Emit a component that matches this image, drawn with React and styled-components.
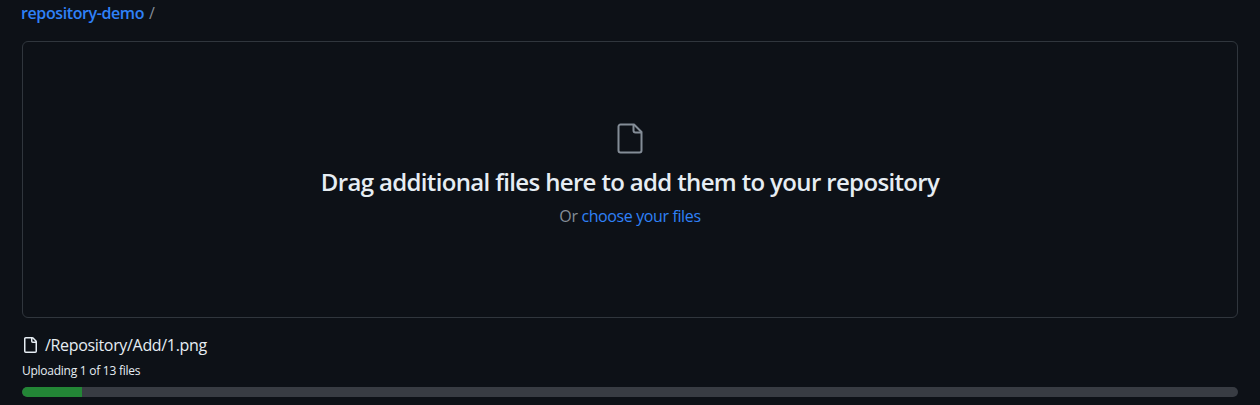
import styled, { createGlobalStyle } from "styled-components";

const GlobalStyle = createGlobalStyle`
  html, body {
    margin: 0;
    padding: 0;
    background: #0d1117;
  }
  body {
    font-family: "Open Sans", "Noto Sans", "Liberation Sans", sans-serif;
    color: #e6edf3;
  }
`;

const Page = styled.div`
  width: 1260px;
  height: 405px;
  overflow: hidden;
  padding: 4px 22px 0 22px;
  box-sizing: border-box;
`;

const Breadcrumb = styled.div`
  height: 18px;
  margin-left: -1px;
  display: flex;
  align-items: center;
  gap: 5px;
  font-size: 16px;
  line-height: 18px;
`;

const RepoLink = styled.a`
  color: #2f81f7;
  font-weight: 600;
  letter-spacing: -0.4px;
`;

const Slash = styled.span`
  color: #848d97;
`;

const DropZone = styled.div`
  margin-top: 19px;
  height: 277px;
  box-sizing: border-box;
  border: 1px solid #30363d;
  border-radius: 6px;
  display: flex;
  flex-direction: column;
  align-items: center;
  padding-top: 81px;
`;

const BigIcon = styled.svg`
  width: 26px;
  height: 31px;
  display: block;
  color: #848d97;
`;

const Title = styled.h2`
  margin: 12px 0 0;
  font-size: 24px;
  line-height: 32px;
  font-weight: 600;
  color: #e6edf3;
  letter-spacing: -0.65px;
`;

const Subtitle = styled.p`
  margin: 8px 0 0;
  font-size: 16px;
  line-height: 20px;
  color: #848d97;
  letter-spacing: -0.38px;
`;

const ChooseLink = styled.a`
  color: #2f81f7;
`;

const FileRow = styled.div`
  margin-top: 17px;
  height: 20px;
  display: flex;
  align-items: center;
  gap: 7px;
  font-size: 16px;
  line-height: 20px;
  color: #e6edf3;
  letter-spacing: -0.33px;
`;

const SmallIcon = styled.svg`
  width: 16px;
  height: 16px;
  display: block;
  fill: #e6edf3;
`;

const Status = styled.div`
  margin-top: 8px;
  font-size: 12px;
  line-height: 15px;
  color: #e6edf3;
  letter-spacing: -0.26px;
`;

const Track = styled.div`
  margin-top: 9px;
  height: 10px;
  border-radius: 6px;
  background: #383c43;
  overflow: hidden;
`;

const Fill = styled.div`
  height: 100%;
  background: #238636;
  border-radius: 6px 0 0 6px;
`;

export default function App() {
  const uploaded = 60 / 1216;
  return (
    <>
      <GlobalStyle />
      <Page>
        <Breadcrumb>
          <RepoLink>repository-demo</RepoLink>
          <Slash>/</Slash>
        </Breadcrumb>
        <DropZone>
          <BigIcon viewBox="0 0 26 31" fill="none" stroke="currentColor" strokeWidth="2" strokeLinejoin="round">
            <path d="M3.5 1.5h13.5l7.5 7.5v18.5a2 2 0 0 1-2 2h-19a2 2 0 0 1-2-2v-24a2 2 0 0 1 2-2Z" />
            <path d="M16.5 1.5v6a2 2 0 0 0 2 2h6" />
          </BigIcon>
          <Title>Drag additional files here to add them to your repository</Title>
          <Subtitle>
            Or <ChooseLink>choose your files</ChooseLink>
          </Subtitle>
        </DropZone>
        <FileRow>
          <SmallIcon viewBox="0 0 16 16">
            <path d="M2 1.75C2 .784 2.784 0 3.75 0h6.586c.464 0 .909.184 1.237.513l2.914 2.914c.329.328.513.773.513 1.237v9.586A1.75 1.75 0 0 1 13.25 16h-9.5A1.75 1.75 0 0 1 2 14.25Zm1.75-.25a.25.25 0 0 0-.25.25v12.5c0 .138.112.25.25.25h9.5a.25.25 0 0 0 .25-.25V6h-2.75A1.75 1.75 0 0 1 9 4.25V1.5Zm6.75.062V4.25c0 .138.112.25.25.25h2.688l-.011-.013-2.914-2.914-.013-.011Z" />
          </SmallIcon>
          /Repository/Add/1.png
        </FileRow>
        <Status>Uploading 1 of 13 files</Status>
        <Track>
          <Fill style={{ width: `${uploaded * 100}%` }} />
        </Track>
      </Page>
    </>
  );
}
